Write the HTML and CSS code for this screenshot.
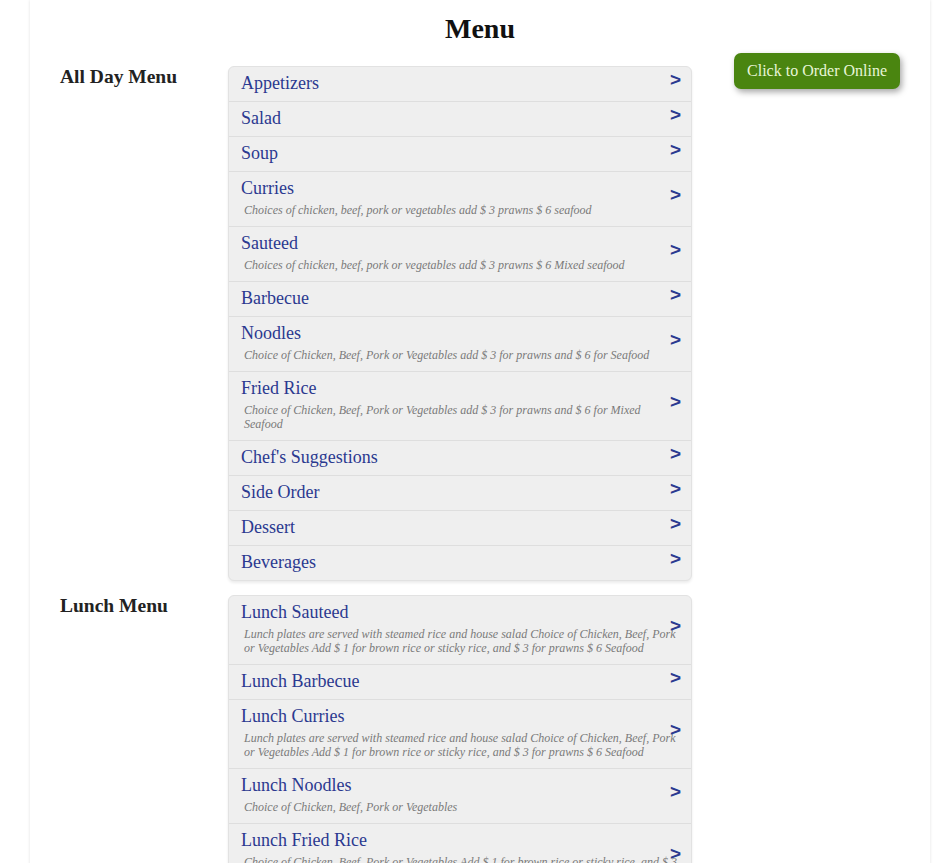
FILE: index.html
```html
<!DOCTYPE html>
<html lang="en">
<head>
  <meta charset="UTF-8">
  <meta name="viewport" content="width=device-width, initial-scale=1.0">
  <title>Menu</title>
  <link rel="stylesheet" href="styles.css">
</head>
<body>
  <div class="page">
    <h1>Menu</h1>

    <div class="menu-layout">
      <h2 class="section-label">All Day Menu</h2>
      <ul class="menu-list">
        <li><a href="#"><span class="item-name">Appetizers</span><span class="arrow">&gt;</span></a></li>
        <li><a href="#"><span class="item-name">Salad</span><span class="arrow">&gt;</span></a></li>
        <li><a href="#"><span class="item-name">Soup</span><span class="arrow">&gt;</span></a></li>
        <li><a href="#"><span class="item-name">Curries</span><span class="item-desc">Choices of chicken, beef, pork or vegetables add $ 3 prawns $ 6 seafood</span><span class="arrow">&gt;</span></a></li>
        <li><a href="#"><span class="item-name">Sauteed</span><span class="item-desc">Choices of chicken, beef, pork or vegetables add $ 3 prawns $ 6 Mixed seafood</span><span class="arrow">&gt;</span></a></li>
        <li><a href="#"><span class="item-name">Barbecue</span><span class="arrow">&gt;</span></a></li>
        <li><a href="#"><span class="item-name">Noodles</span><span class="item-desc">Choice of Chicken, Beef, Pork or Vegetables add $ 3 for prawns and $ 6 for Seafood</span><span class="arrow">&gt;</span></a></li>
        <li><a href="#"><span class="item-name">Fried Rice</span><span class="item-desc">Choice of Chicken, Beef, Pork or Vegetables add $ 3 for prawns and $ 6 for Mixed Seafood</span><span class="arrow">&gt;</span></a></li>
        <li><a href="#"><span class="item-name">Chef's Suggestions</span><span class="arrow">&gt;</span></a></li>
        <li><a href="#"><span class="item-name">Side Order</span><span class="arrow">&gt;</span></a></li>
        <li><a href="#"><span class="item-name">Dessert</span><span class="arrow">&gt;</span></a></li>
        <li><a href="#"><span class="item-name">Beverages</span><span class="arrow">&gt;</span></a></li>
      </ul>

      <div class="order-box">
        <a href="#" class="order-btn">Click to Order Online</a>
      </div>

      <h2 class="section-label">Lunch Menu</h2>
      <ul class="menu-list">
        <li><a href="#"><span class="item-name">Lunch Sauteed</span><span class="item-desc">Lunch plates are served with steamed rice and house salad Choice of Chicken, Beef, Pork or Vegetables Add $ 1 for brown rice or sticky rice, and $ 3 for prawns $ 6 Seafood</span><span class="arrow">&gt;</span></a></li>
        <li><a href="#"><span class="item-name">Lunch Barbecue</span><span class="arrow">&gt;</span></a></li>
        <li><a href="#"><span class="item-name">Lunch Curries</span><span class="item-desc">Lunch plates are served with steamed rice and house salad Choice of Chicken, Beef, Pork or Vegetables Add $ 1 for brown rice or sticky rice, and $ 3 for prawns $ 6 Seafood</span><span class="arrow">&gt;</span></a></li>
        <li><a href="#"><span class="item-name">Lunch Noodles</span><span class="item-desc">Choice of Chicken, Beef, Pork or Vegetables</span><span class="arrow">&gt;</span></a></li>
        <li><a href="#"><span class="item-name">Lunch Fried Rice</span><span class="item-desc">Choice of Chicken, Beef, Pork or Vegetables Add $ 1 for brown rice or sticky rice, and $ 3 for prawns $ 6 Seafood</span><span class="arrow">&gt;</span></a></li>
      </ul>
    </div>
  </div>
</body>
</html>
```

FILE: styles.css
```css
html, body { margin: 0; padding: 0; }
body { font-family: 'Liberation Serif', 'Times New Roman', serif; background: #fff; color: #222; }

.page {
  width: 840px;
  margin-left: 30px;
  padding: 13px 30px 40px;
  box-shadow: 0 0 3px rgba(0,0,0,0.12);
  min-height: 900px;
}

h1 { margin: 0 0 21px; font-size: 28px; line-height: 32px; text-align: center; color: #111; }

.menu-layout {
  display: grid;
  grid-template-columns: 168px 464px 1fr;
  row-gap: 14px;
  align-items: start;
}

.section-label { margin: 0; font-size: 19.5px; line-height: 22px; color: #222; }

.menu-list {
  list-style: none; margin: 0; padding: 0;
  background: #efefef;
  border: 1px solid #e2e2e2;
  border-radius: 6px;
  box-shadow: 0 2px 3px rgba(0,0,0,0.08);
  overflow: hidden;
}
.menu-list li { border-bottom: 1px solid #dedede; }
.menu-list li:last-child { border-bottom: none; }
.menu-list a {
  position: relative;
  display: block;
  padding: 6px 12px 7px;
  text-decoration: none;
}
.item-name { display: block; font-size: 18px; line-height: 21px; color: #2b3990; }
.item-desc {
  display: block;
  margin: 4px 0 2px 3px;
  max-width: 436px;
  font-size: 12px; line-height: 14px;
  font-style: italic; color: #7a7a7a;
}
.arrow {
  position: absolute;
  right: 10px; top: 50%;
  transform: translateY(-68%);
  font-family: 'Liberation Sans', Arial, sans-serif;
  font-weight: bold; font-size: 19px; line-height: 22px;
  color: #2b3990;
}

.order-box { grid-column: 3; grid-row: 1; justify-self: end; margin-top: -13px; }
.order-btn {
  display: inline-block;
  padding: 8px 13px 9px;
  background: #4a8510; color: #e8f6d8;
  font-size: 16px; line-height: 19px;
  text-decoration: none;
  border-radius: 7px;
  box-shadow: 2px 3px 6px rgba(0,0,0,0.35);
}
.order-btn:hover { background: #3f7409; }
```
